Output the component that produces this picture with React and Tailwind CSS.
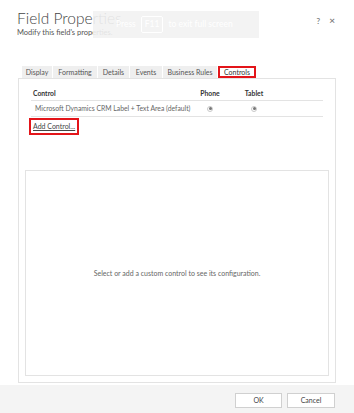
import React from "react";

const tabs = [
  ["Display", "w-[30px]"],
  ["Formatting", "w-[44px]"],
  ["Details", "w-[31px]"],
  ["Events", "w-[32px]"],
  ["Business Rules", "w-[54px]"],
  ["Controls", "w-[38px]"],
];

const Radio = () => (
  <span className="flex h-[6px] w-[6px] items-center justify-center rounded-full border border-[#c8c8c8] bg-white">
    <span className="h-[3px] w-[3px] rounded-full bg-[#777]" />
  </span>
);

const App = () => {
  return (
    <div
      className="relative flex h-[413px] w-[354px] flex-col overflow-hidden bg-white text-[#444]"
      style={{ fontFamily: 'Lato, "Open Sans", "Liberation Sans", sans-serif' }}
    >
      {/* full screen hint from the browser */}
      <div className="absolute left-[93px] top-[11px] flex h-[27px] w-[166px] items-center gap-[5px] bg-[#f2f2f2]/90 pl-[23px] text-[8.5px] text-white">
        <span>Press</span>
        <span className="rounded-[2px] border border-white px-[3px] py-[1px]">F11</span>
        <span>to exit full screen</span>
      </div>

      <header className="flex items-start justify-between pl-[17px] pr-[19px] pt-[8px]">
        <div>
          <h1 className="text-[15.5px] font-light leading-[20px] text-[#444]">Field Properties</h1>
          <p className="text-[7.5px] leading-[10px] text-[#555]">Modify this field's properties.</p>
        </div>
        <div className="mt-[5px] flex items-center gap-[9px] text-[8px] font-semibold text-[#777]">
          <span>?</span>
          <span className="text-[10px]">×</span>
        </div>
      </header>

      <div className="ml-[22px] mt-[28px] flex h-[12px] items-stretch text-[7px] text-[#555]">
        {tabs.map(([tab, width]) =>
          tab === "Controls" ? (
            <div
              key={tab}
              className={`${width} flex items-center justify-center border-2 border-[#e3151a] bg-white text-[#333]`}
            >
              {tab}
            </div>
          ) : (
            <div key={tab} className={`${width} mr-px flex items-center justify-center bg-[#efefef]`}>
              {tab}
            </div>
          ),
        )}
      </div>

      <section className="mx-[18px] mb-[2px] flex flex-1 flex-col border border-[#e3e3e3] px-[6px] pb-[6px]">
        <div className="mx-[6px] mt-[7px] text-[6.8px]">
          <div className="grid h-[15px] grid-cols-[157px_44px_44px_1fr] items-center border-b border-[#e3e3e3] font-bold text-[#333]">
            <span className="pl-[2px]">Control</span>
            <span className="text-center">Phone</span>
            <span className="text-center">Tablet</span>
            <span />
          </div>
          <div className="grid h-[16px] grid-cols-[157px_44px_44px_1fr] items-center border-b border-[#e3e3e3] text-[#666]">
            <span className="whitespace-nowrap pl-[4px]">Microsoft Dynamics CRM Label + Text Area (default)</span>
            <span className="flex justify-center"><Radio /></span>
            <span className="flex justify-center"><Radio /></span>
            <span />
          </div>
        </div>
        <div className="ml-[4px] mt-px self-start border-2 border-[#e3151a] px-[2px] py-[1px] text-[7px] text-[#444] underline">
          Add Control...
        </div>

        <div className="mt-[35px] flex flex-1 items-center justify-center border border-[#e3e3e3] text-[7px] text-[#666]">
          Select or add a custom control to see its configuration.
        </div>
      </section>

      <footer className="flex h-[28px] items-start justify-end gap-[5px] bg-[#f4f4f4] pr-[19px] pt-[8px] text-[7px] text-[#444]">
        <button type="button" className="h-[15px] w-[47px] border border-[#d0d0d0] bg-white">OK</button>
        <button type="button" className="h-[15px] w-[48px] border border-[#d0d0d0] bg-white">Cancel</button>
      </footer>
    </div>
  );
};

export default App;
